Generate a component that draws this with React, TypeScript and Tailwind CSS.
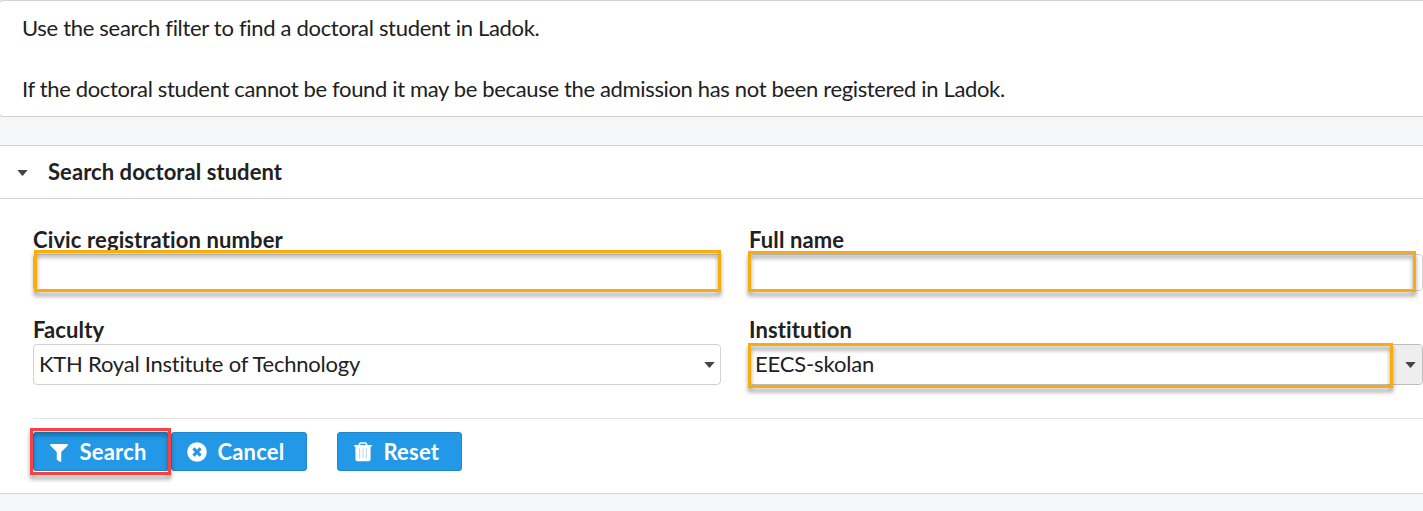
import type { ReactNode } from 'react'
import { FaFilter } from 'react-icons/fa'

function Caret() {
  return (
    <svg className="mt-px block h-[6px] w-[11px] shrink-0" viewBox="0 0 11 6" fill="#454545">
      <path d="M0.3 0H10.7L6 5.4Q5.5 5.9 5 5.4Z" />
    </svg>
  )
}

function CancelIcon() {
  return (
    <svg className="-ml-px mt-px block h-5 w-5" viewBox="0 0 20 20">
      <circle cx="10" cy="10" r="9.8" fill="#fff" />
      <path d="M6.4 6.4L13.6 13.6M13.6 6.4L6.4 13.6" stroke="#2398e6" strokeWidth="3" />
    </svg>
  )
}

function TrashIcon() {
  return (
    <svg className="mt-px block h-5 w-[18px]" viewBox="0 0 18 20">
      <path
        fill="#fff"
        fillRule="evenodd"
        d="M0 3H4.4L5.2 1.1Q5.6 0.3 6.5 0.3H11.5Q12.4 0.3 12.8 1.1L13.6 3H18V4.6H16.6V17.2Q16.6 19.3 14.6 19.3H3.4Q1.4 19.3 1.4 17.2V4.6H0ZM6.2 3H11.8L11.3 1.8H6.7Z"
      />
      <path d="M5.6 6.6V16M9 6.6V16M12.4 6.6V16" stroke="#b5daf6" strokeWidth="1.1" />
    </svg>
  )
}

function Highlight({ className }: { className: string }) {
  return (
    <div
      className={`pointer-events-none absolute z-10 border-3 border-[#faac0c] drop-shadow-[0_4px_2px_rgba(0,0,0,0.4)] ${className}`}
    />
  )
}

function Field({ label, children }: { label: string; children: ReactNode }) {
  return (
    <div className="flex h-[90px] flex-col">
      <label className="h-[29px] pt-[2px] leading-[26px] font-bold tracking-[0.12px]">{label}</label>
      {children}
    </div>
  )
}

function Button({ icon, label, className }: { icon: ReactNode; label: string; className: string }) {
  return (
    <button
      className={`flex h-[39px] items-center rounded-[3px] border border-[#1f87cc] bg-[#2398e6] pl-4 font-bold tracking-[0.2px] text-white ${className}`}
    >
      <span className="flex w-[29.5px] items-center">{icon}</span>
      {label}
    </button>
  )
}

export default function App() {
  return (
    <div className="h-[511px] overflow-hidden bg-[#f5f6f8] font-['Lato',sans-serif] text-[22px] text-[#212121] [font-variant-ligatures:none]">
      <section className="-ml-px h-[117px] rounded-l-[4px] border-y border-l border-[#d2d2d2] bg-white pt-3 pl-[22px] leading-[30.5px] tracking-[-0.35px]">
        <p className="tracking-[-0.31px]">Use the search filter to find a doctoral student in Ladok.</p>
        <p className="mt-[30.5px]">
          If the doctoral student cannot be found it may be because the admission has not been registered in Ladok.
        </p>
      </section>

      <section className="mt-7 h-[349px] border-y border-[#d2d2d2] bg-white">
        <h2 className="flex h-[53px] items-center gap-5 border-b border-[#d2d2d2] pl-[17px] font-bold tracking-[0.06px]">
          <Caret />
          <span className="-mt-0.5">Search doctoral student</span>
        </h2>

        <div className="pt-[26px] pl-[33px]">
          <div className="grid grid-cols-[688px_674px] gap-x-7">
            <Field label="Civic registration number">
              <div className="relative h-[37px] rounded-[4px] border border-[#d2d2d2]">
                <Highlight className="-top-[5px] left-0 h-[42px] w-[687px]" />
              </div>
            </Field>
            <Field label="Full name">
              <div className="relative h-[37px] rounded-[4px] border border-[#d2d2d2]">
                <Highlight className="-top-[4px] -left-[2px] h-[41px] w-[668px]" />
              </div>
            </Field>
            <Field label="Faculty">
              <div className="flex h-[41px] items-center justify-between rounded-[4px] border border-[#d2d2d2] pr-[5px] pl-[5px]">
                <span className="-mt-0.5 tracking-[-0.23px]">KTH Royal Institute of Technology</span>
                <Caret />
              </div>
            </Field>
            <Field label="Institution">
              <div className="relative flex h-[41px] rounded-[4px] border border-[#bdbdbd]">
                <div className="flex flex-1 items-center pb-0.5 pl-[5px] tracking-[-0.15px]">EECS-skolan</div>
                <div className="flex w-[31px] items-center justify-end rounded-r-[3px] bg-[#eee] pr-[6px]">
                  <Caret />
                </div>
                <Highlight className="-top-[2px] -left-[2px] h-[45px] w-[645px]" />
              </div>
            </Field>
          </div>

          <div className="mt-[13px] flex border-t border-[#e2e2e2] pt-[13px]">
            <div className="relative">
              <Button
                icon={<FaFilter className="mt-[3px] h-[18px] w-[18px]" />}
                label="Search"
                className="w-[136px]"
              />
              <div className="pointer-events-none absolute -top-[4px] -left-[3px] h-[47px] w-[141px] border-3 border-[#f94144] drop-shadow-[0_4px_2px_rgba(0,0,0,0.4)]" />
            </div>
            <Button icon={<CancelIcon />} label="Cancel" className="ml-[2px] w-[136px]" />
            <Button icon={<TrashIcon />} label="Reset" className="ml-[30px] w-[125px]" />
          </div>
        </div>
      </section>
    </div>
  )
}
